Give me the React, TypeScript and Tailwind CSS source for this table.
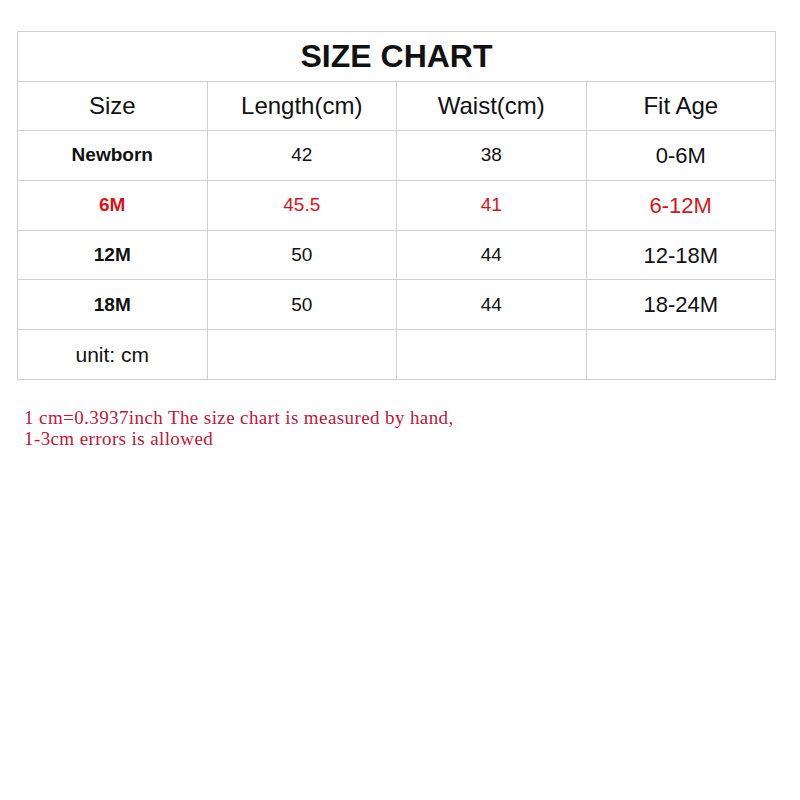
import React from "react";

interface Row {
  size: string;
  length: string;
  waist: string;
  age: string;
  red?: boolean;
}

const rows: Row[] = [
  { size: "Newborn", length: "42", waist: "38", age: "0-6M" },
  { size: "6M", length: "45.5", waist: "41", age: "6-12M", red: true },
  { size: "12M", length: "50", waist: "44", age: "12-18M" },
  { size: "18M", length: "50", waist: "44", age: "18-24M" },
];

const cell = "border border-[#d0d0d0] h-[49.7px] w-[190px] text-center align-middle p-0";

const App: React.FC = () => {
  return (
    <div className="w-[800px] h-[800px] bg-white pl-[17px] pt-[31px] font-['Liberation_Sans',Arial,sans-serif] text-[#111]">
      <table className="border-collapse w-[759px] table-fixed">
        <tbody>
          <tr>
            <td colSpan={4} className={`${cell} text-[32px] font-bold`}>
              SIZE CHART
            </td>
          </tr>
          <tr>
            <td className={`${cell} text-[24px]`}>Size</td>
            <td className={`${cell} text-[24px]`}>Length(cm)</td>
            <td className={`${cell} text-[24px]`}>Waist(cm)</td>
            <td className={`${cell} text-[24px]`}>Fit Age</td>
          </tr>
          {rows.map((row) => (
            <tr key={row.size} className={row.red ? "text-[#d7141c]" : ""}>
              <td className={`${cell} text-[19px] font-bold`}>{row.size}</td>
              <td className={`${cell} text-[19px]`}>{row.length}</td>
              <td className={`${cell} text-[19px]`}>{row.waist}</td>
              <td className={`${cell} text-[22px]`}>{row.age}</td>
            </tr>
          ))}
          <tr>
            <td className={`${cell} text-[21px]`}>unit: cm</td>
            <td className={cell}></td>
            <td className={cell}></td>
            <td className={cell}></td>
          </tr>
        </tbody>
      </table>

      {/* footnote */}
      <div className="mt-[27px] ml-[7px] font-['Liberation_Serif',Georgia,serif] text-[19px] leading-[21px] tracking-[0.4px] text-[#c0163c]">
        <p>1 cm=0.3937inch The size chart is measured by hand,</p>
        <p>1-3cm errors is allowed</p>
      </div>
    </div>
  );
};

export default App;
